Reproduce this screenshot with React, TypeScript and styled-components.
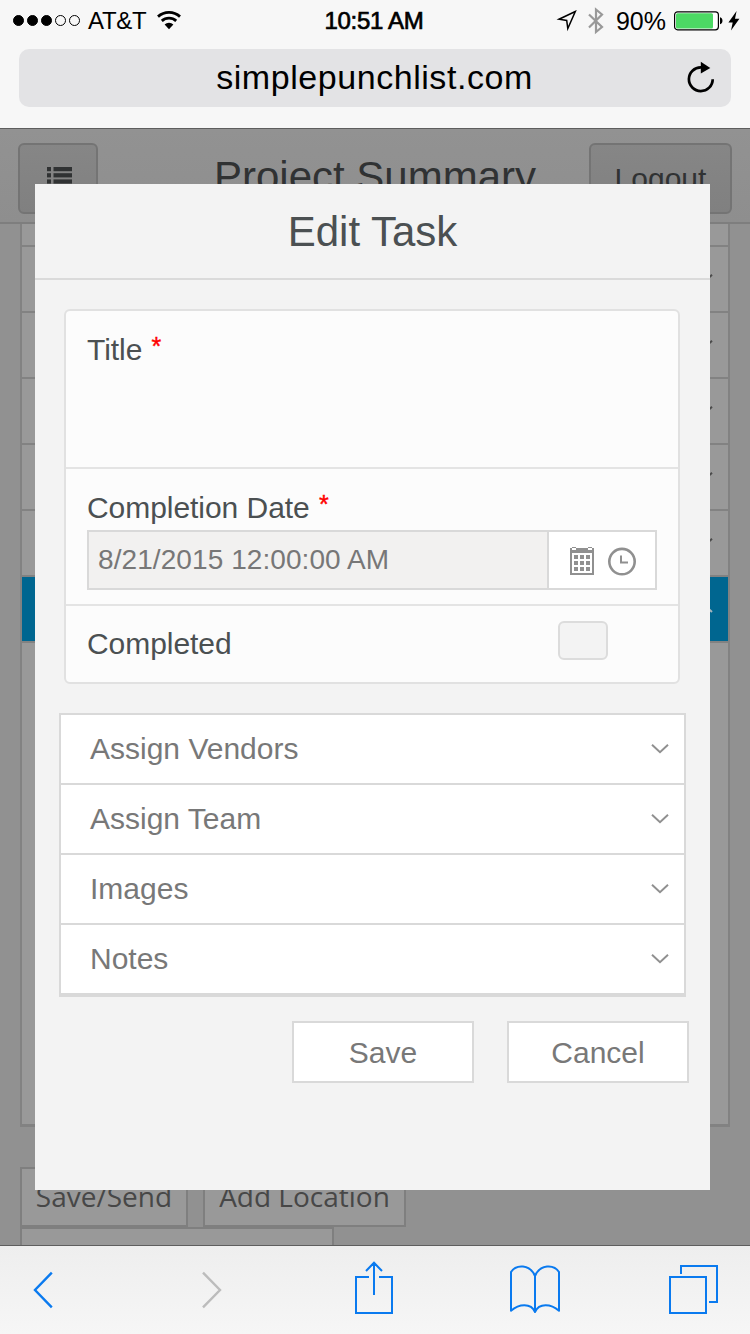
import React from 'react';
import styled, { createGlobalStyle } from 'styled-components';

const GlobalStyle = createGlobalStyle`
  * { box-sizing: border-box; }
  html, body { margin: 0; padding: 0; }
  body { font-family: "Liberation Sans", Arial, sans-serif; background: #f6f6f6; }
  button, input { font-family: inherit; margin: 0; padding: 0; border-radius: 0; }
  svg { display: block; flex: none; }
`;

const Phone = styled.div`
  width: 750px;
  height: 1334px;
  display: flex;
  flex-direction: column;
  overflow: hidden;
`;

/* Browser chrome */

const Chrome = styled.header`
  height: 129px;
  flex: none;
  background: #f7f7f7;
  border-bottom: 1px solid #5e5e5e;
  padding: 0 19px;
`;

const StatusBar = styled.div`
  height: 49px;
  margin: 0 -9px 0 -6px;
  padding-bottom: 8px;
  display: grid;
  grid-template-columns: 1fr auto 1fr;
  align-items: center;
  color: #000;
  font-size: 24px;
  line-height: 28px;
`;

const StatusGroup = styled.div<{ $end?: boolean }>`
  display: flex;
  align-items: center;
  justify-content: ${(p) => (p.$end ? 'flex-end' : 'flex-start')};
`;

const StatusGap = styled.span<{ $width: number }>`
  width: ${(p) => p.$width}px;
`;

const Signal = styled.div`
  display: flex;
  gap: 3px;
  margin-right: 8px;
`;

const Dot = styled.span<{ $on: boolean }>`
  width: 11px;
  height: 11px;
  border-radius: 50%;
  border: 1px solid #000;
  background: ${(p) => (p.$on ? '#000' : 'transparent')};
`;

const Carrier = styled.span`
  margin-right: 10px;
  letter-spacing: -0.3px;
`;

const Clock = styled.span`
  margin-right: 5px;
  letter-spacing: -0.3px;
  -webkit-text-stroke: 0.7px #000;
`;

const Percent = styled.span`
  font-size: 25px;
  margin: 0 8px 0 12px;
`;

const AddressBar = styled.div`
  height: 58px;
  border-radius: 10px;
  background: #e3e3e5;
  display: grid;
  grid-template-columns: 45px 1fr 46px;
  align-items: center;
  padding: 0 7px 1px;
  font-size: 34px;
  line-height: 40px;
  text-align: center;
  color: #000;
  letter-spacing: 0.55px;
`;

const Address = styled.span`
  padding-bottom: 2px;
`;

/* Page behind the dialog */

const Viewport = styled.main`
  position: relative;
  height: 1116px;
  flex: none;
  overflow: hidden;
  background: #919191;
`;

const PageHeader = styled.div`
  height: 95px;
  padding: 14px 18px 0;
  border-bottom: 2px solid #7e7e7e;
  background: linear-gradient(#929292, #8e8e8e);
  display: grid;
  grid-template-columns: 143px 1fr 143px;
  color: #303233;
`;

const HeaderButton = styled.button<{ $width: number; $end?: boolean }>`
  width: ${(p) => p.$width}px;
  height: 71px;
  justify-self: ${(p) => (p.$end ? 'end' : 'start')};
  border: 2px solid #747474;
  border-radius: 6px;
  background: linear-gradient(#868686, #808080);
  color: #303233;
  font-size: 30px;
  display: flex;
  align-items: center;
  justify-content: center;
`;

const PageTitle = styled.div`
  font-size: 42px;
  line-height: 67px;
  text-align: center;
  white-space: nowrap;
`;

const LocationPanel = styled.div`
  height: 903px;
  margin: 0 20px;
  border: solid #828282;
  border-width: 0 2px 3px;
  background: #999;
`;

const LocationRow = styled.div<{ $short?: boolean; $active?: boolean }>`
  height: ${(p) => (p.$short ? 23 : 66)}px;
  border-bottom: 2px solid #828282;
  padding: 0 14px;
  display: flex;
  align-items: center;
  justify-content: flex-end;
  background: ${(p) => (p.$active ? '#006690' : '#999')};
`;

const PageActions = styled.div`
  margin: 40px 20px 0;
  display: flex;
  flex-wrap: wrap;
  column-gap: 15px;
`;

const PageAction = styled.button<{ $width: number }>`
  width: ${(p) => p.$width}px;
  height: 60px;
  padding-bottom: 2px;
  border: 2px solid #7f7f7f;
  background: #999;
  color: #474747;
  font-family: "Open Sans", "Noto Sans", sans-serif;
  font-size: 28px;
  line-height: 54px;
  white-space: nowrap;
`;

/* Dialog */

const Dialog = styled.section`
  position: absolute;
  left: 35px;
  top: 55px;
  width: 675px;
  height: 1006px;
  background: #f3f3f3;
`;

const DialogTitle = styled.h1`
  margin: 0;
  height: 96px;
  border-bottom: 2px solid #dadada;
  font-size: 42px;
  font-weight: 400;
  line-height: 96px;
  text-align: center;
  color: #4b5052;
`;

const FormCard = styled.div`
  margin: 29px 30px 0 29px;
  height: 375px;
  border: 2px solid #e1e1e1;
  border-radius: 6px;
  background: #fcfcfc;
  color: #4b5052;
  font-size: 30px;
  line-height: 36px;
`;

const Field = styled.div<{ $height: number; $last?: boolean }>`
  height: ${(p) => p.$height}px;
  padding: 21px 21px 0;
  border-bottom: ${(p) => (p.$last ? 0 : 2)}px solid #e4e4e4;
`;

const InlineField = styled(Field)`
  display: flex;
  justify-content: space-between;
  padding: 15px 70px 0 21px;
`;

const Label = styled.label`
  display: block;
  height: 36px;
  letter-spacing: -0.05px;
`;

const InlineLabel = styled(Label)`
  margin-top: 5px;
`;

const Required = styled.span`
  color: #f00;
  font-size: 25px;
  line-height: 0;
  vertical-align: 5px;
  margin-left: 1px;
  -webkit-text-stroke: 0.4px #f00;
`;

const DatePicker = styled.div`
  height: 60px;
  margin-top: 4px;
  width: 570px;
  display: flex;
  border: 2px solid #d9d9d9;
  background: #fff;
`;

const DateValue = styled.div`
  flex: 1;
  border-right: 2px solid #d9d9d9;
  background: #f2f1f0;
  padding-left: 9px;
  font-size: 28px;
  line-height: 55px;
  letter-spacing: 0.08px;
  color: #777;
`;

const PickerIcons = styled.div`
  width: 106px;
  display: flex;
  align-items: center;
  gap: 13px;
  padding: 2px 0 0 21px;
`;

const Checkbox = styled.span`
  width: 50px;
  height: 39px;
  border: 2px solid #dcdcdc;
  border-radius: 6px;
  background: #f3f3f3;
`;

const Accordion = styled.div`
  margin: 29px 24px 0;
  border: 2px solid #d9d9d9;
  border-bottom-width: 4px;
`;

const AccordionRow = styled.div`
  height: 70px;
  padding: 0 14px 0 29px;
  display: flex;
  align-items: center;
  justify-content: space-between;
  background: #fff;
  color: #787878;
  font-size: 30px;
  border-bottom: 2px solid #d9d9d9;
  &:last-child { height: 68px; border-bottom: 0; }
`;

const DialogActions = styled.div`
  display: flex;
  justify-content: flex-end;
  gap: 33px;
  margin: 24px 21px 0 0;
`;

const DialogButton = styled.button`
  width: 182px;
  height: 62px;
  padding-top: 2px;
  border: 2px solid #d9d9d9;
  background: #fff;
  color: #787878;
  font-size: 30px;
`;

/* Bottom toolbar */

const Toolbar = styled.nav`
  height: 89px;
  flex: none;
  border-top: 1px solid #5e5e5e;
  background: linear-gradient(#eeeeee, #f6f6f6);
  padding: 0 31px;
  display: flex;
  align-items: center;
`;

const ToolButton = styled.button<{ $gap?: number; $lift?: number }>`
  border: 0;
  background: none;
  margin-left: ${(p) => p.$gap ?? 0}px;
  padding-bottom: ${(p) => p.$lift ?? 0}px;
`;

const WifiIcon = () => (
  <svg width="26" height="22" viewBox="0 0 26 22" fill="none" stroke="#000">
    <path d="M2 6.600A16.400 16.400 0 0 1 24 6.600" strokeWidth="2.800" />
    <path d="M5.800 10.900A10.600 10.600 0 0 1 20.200 10.900" strokeWidth="2.800" />
    <path d="M8.600 14.600a6.300 6.300 0 0 1 8.800 0L13 19.200z" fill="#000" stroke="none" />
  </svg>
);

const LocationIcon = () => (
  <svg width="22" height="22" viewBox="0 0 22 22" fill="none" stroke="#000" strokeWidth="1.500">
    <path d="M19.300 1.500L3 9.200l7.700 1.300 1.100 8z" />
  </svg>
);

const BluetoothIcon = () => (
  <svg width="16" height="28" viewBox="0 0 16 28" fill="none" stroke="#999" strokeWidth="2.200">
    <path d="M1 7.500L14 20l-6 5V2.500l6 5L1 20.500" />
  </svg>
);

const BatteryIcon = () => (
  <svg width="50" height="20" viewBox="0 0 50 20">
    <rect x="0.600" y="0.800" width="43.800" height="18" rx="3" fill="#fff" stroke="#000" strokeWidth="1.200" />
    <rect x="2" y="2.200" width="37" height="15.200" rx="1.500" fill="#4cd964" />
    <path d="M46 6.300c3.300.7 3.300 6.300 0 7z" />
  </svg>
);

const BoltIcon = () => (
  <svg width="12" height="20" viewBox="0 0 12 20">
    <path d="M8.600 0L.4 11.600h4.300L3 19.600l8.400-11.800H7z" />
  </svg>
);

const ReloadIcon = () => (
  <svg width="46" height="34" viewBox="-8.500 0 46 34">
    <path d="M14.500 6.300A11.900 11.900 0 1 0 26.200 18.200" fill="none" stroke="#000" strokeWidth="2.700" />
    <path d="M14.300 0.800L23.800 6.900L14.300 12.600z" />
  </svg>
);

const ListIcon = () => (
  <svg width="26" height="24" viewBox="-2 0 26 24" fill="#303233" overflow="visible">
    {[0, 6.2, 12.4, 18.6].map((y) => (
      <g key={y}>
        <rect x="0" y={y} width="4" height="4.200" />
        <rect x="6.500" y={y} width="18.500" height="4.200" />
      </g>
    ))}
  </svg>
);

const CalendarIcon = () => (
  <svg width="24" height="28" viewBox="0 0 24 28" fill="#909090">
    <path fillRule="evenodd" d="M0 1h2v2h4V1h12v2h4V1h2v27H0zM2 6v20h20V6z" />
    <path d="M2 0h4v1H2zM18 0h4v1h-4z" />
    {[8, 14, 20].map((y) => [4, 10, 16].map((x) => <rect key={`${x}-${y}`} x={x} y={y} width="4" height="4" />))}
  </svg>
);

const ClockIcon = () => (
  <svg width="30" height="28" viewBox="0 -0.600 30 28" fill="none" stroke="#909090" overflow="visible">
    <circle cx="15" cy="14" r="12.700" strokeWidth="2.600" />
    <path d="M14 8v7h7" strokeWidth="2" />
  </svg>
);

const Chevron = ({ up, color = '#909090' }: { up?: boolean; color?: string }) => (
  <svg width="20" height="12" viewBox="0 0 20 12" fill="none" stroke={color} strokeWidth="2">
    <path d={up ? 'M2 9l8-7.500L18 9' : 'M2 1.800l8 7.400 8-7.400'} />
  </svg>
);

const BackIcon = () => (
  <svg width="24" height="40" viewBox="0 0 24 40" fill="none" stroke="#0a7aef" strokeWidth="2.400">
    <path d="M20.800 2.700L4 20l16.800 17.300" />
  </svg>
);

const ForwardIcon = () => (
  <svg width="24" height="40" viewBox="0 0 24 40" fill="none" stroke="#bcbcbc" strokeWidth="2.400">
    <path d="M4 2.700L21 20 4 37.300" />
  </svg>
);

const ShareIcon = () => (
  <svg width="40" height="56" viewBox="0 0 40 56" fill="none" stroke="#0a7aef" strokeWidth="2">
    <path d="M15 17H2v36h36V17H25M20 35V2.800M12 11l8-8.200L28 11" />
  </svg>
);

const BookIcon = () => (
  <svg width="52" height="50" viewBox="0 0 52 50" fill="none" stroke="#0a7aef" strokeWidth="2" strokeLinejoin="round">
    <path d="M26 47V11C21-1 7-1 2 7v38.800c8-7 20-8 24 1.200 4-9.200 16-8.200 24-1.200V7C45-1 31-1 26 11" />
  </svg>
);

const TabsIcon = () => (
  <svg width="50" height="50" viewBox="0 0 50 50" fill="none" stroke="#0a7aef" strokeWidth="2">
    <path d="M1 12h36v36H1zM12 9V1h36v36h-8" />
  </svg>
);

const SECTIONS = ['Assign Vendors', 'Assign Team', 'Images', 'Notes'];

export default function App() {
  return (
    <Phone>
      <GlobalStyle />
      <Chrome>
        <StatusBar>
          <StatusGroup>
            <Signal>
              {[true, true, true, false, false].map((on, i) => (
                <Dot key={i} $on={on} />
              ))}
            </Signal>
            <Carrier>AT&amp;T</Carrier>
            <WifiIcon />
          </StatusGroup>
          <Clock>10:51 AM</Clock>
          <StatusGroup $end>
            <LocationIcon />
            <StatusGap $width={10} />
            <BluetoothIcon />
            <Percent>90%</Percent>
            <BatteryIcon />
            <StatusGap $width={4} />
            <BoltIcon />
          </StatusGroup>
        </StatusBar>
        <AddressBar>
          <span />
          <Address>simplepunchlist.com</Address>
          <ReloadIcon />
        </AddressBar>
      </Chrome>

      <Viewport>
        <PageHeader>
          <HeaderButton $width={80}>
            <ListIcon />
          </HeaderButton>
          <PageTitle>Project Summary</PageTitle>
          <HeaderButton $width={143} $end>
            Logout
          </HeaderButton>
        </PageHeader>
        <LocationPanel>
          <LocationRow $short />
          {[0, 1, 2, 3, 4].map((i) => (
            <LocationRow key={i}>
              <Chevron color="#4b4b4b" />
            </LocationRow>
          ))}
          <LocationRow $active>
            <Chevron up color="#a5b5bd" />
          </LocationRow>
        </LocationPanel>
        <PageActions>
          <PageAction $width={168}>Save/Send</PageAction>
          <PageAction $width={203}>Add Location</PageAction>
          <PageAction $width={314} />
        </PageActions>

        <Dialog role="dialog">
          <DialogTitle>Edit Task</DialogTitle>
          <FormCard>
            <Field $height={158}>
              <Label>
                Title <Required>*</Required>
              </Label>
            </Field>
            <Field $height={137}>
              <Label>
                Completion Date <Required>*</Required>
              </Label>
              <DatePicker>
                <DateValue>8/21/2015 12:00:00 AM</DateValue>
                <PickerIcons>
                  <CalendarIcon />
                  <ClockIcon />
                </PickerIcons>
              </DatePicker>
            </Field>
            <InlineField $height={76} $last>
              <InlineLabel>Completed</InlineLabel>
              <Checkbox />
            </InlineField>
          </FormCard>
          <Accordion>
            {SECTIONS.map((name) => (
              <AccordionRow key={name}>
                {name}
                <Chevron />
              </AccordionRow>
            ))}
          </Accordion>
          <DialogActions>
            <DialogButton>Save</DialogButton>
            <DialogButton>Cancel</DialogButton>
          </DialogActions>
        </Dialog>
      </Viewport>

      <Toolbar>
        <ToolButton>
          <BackIcon />
        </ToolButton>
        <ToolButton $gap={144}>
          <ForwardIcon />
        </ToolButton>
        <ToolButton $gap={131} $lift={4}>
          <ShareIcon />
        </ToolButton>
        <ToolButton $gap={115}>
          <BookIcon />
        </ToolButton>
        <ToolButton $gap={108}>
          <TabsIcon />
        </ToolButton>
      </Toolbar>
    </Phone>
  );
}
